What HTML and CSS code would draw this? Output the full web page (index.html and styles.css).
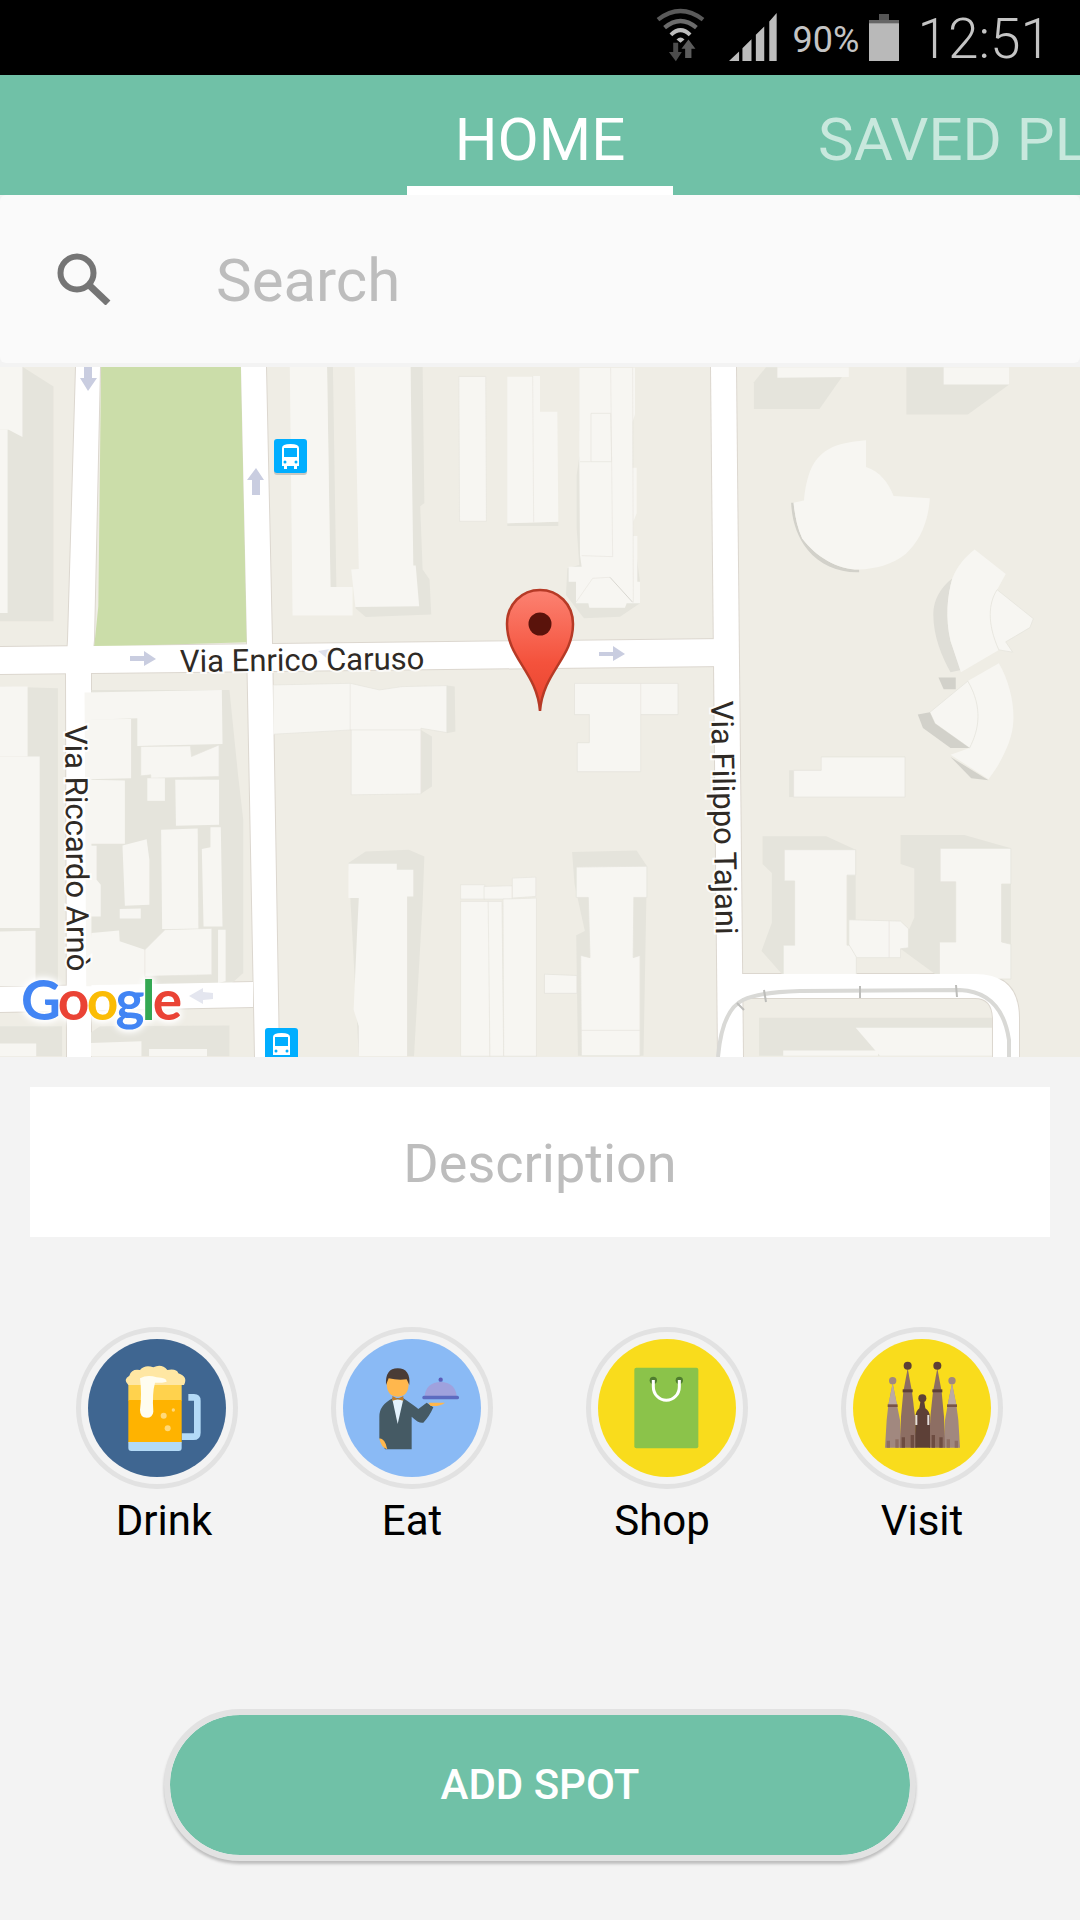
FILE: index.html
```html
<!DOCTYPE html>
<html>
<head>
<meta charset="utf-8">
<title>Home</title>
<link rel="stylesheet" href="styles.css">
</head>
<body>
<div id="screen">

<div class="statusbar">
  <svg class="st-wifi" viewBox="160 25 160 170">
    <path d="M172 62 Q240 10 308 62" fill="none" stroke="#5a5a5a" stroke-width="13"/>
    <path d="M192 86 Q240 46 288 86" fill="none" stroke="#6b6b6b" stroke-width="13"/>
    <path d="M211 108 Q240 80 269 108" fill="none" stroke="#bdbdbd" stroke-width="12"/>
    <path d="M228 122 Q240 110 252 122 L240 132 Z" fill="#bdbdbd"/>
    <path d="M218 132 H233 V160 H244 L226 188 L205 160 H218 Z" fill="#4c4c4c"/>
    <path d="M264 122 L285 150 H273 V178 H254 V150 H243 Z" fill="#5c5c5c"/>
  </svg>
  <svg class="st-signal" viewBox="385 40 143 143">
    <path d="M385 183 L415 155 V183 Z M425 145 L452 118 V183 H425 Z M465 105 L490 80 V183 H465 Z M505 65 L527 40 V183 H505 Z" fill="#bdbdbd"/>
  </svg>
  <span class="st-pct">90%</span>
  <svg class="st-batt" viewBox="807 37 90 141">
    <rect x="837" y="37" width="30" height="20" fill="#555"/>
    <rect x="807" y="55" width="90" height="123" fill="#b9b9b9"/>
    <rect x="807" y="55" width="90" height="10" fill="#666"/>
  </svg>
  <span class="st-time">12:51</span>
</div>

<div class="tabs">
  <div class="tab tab-on">HOME</div>
  <div class="tab tab-off">SAVED PLACES</div>
</div>

<div class="search">
  <svg class="search-icon" viewBox="0 0 54 52">
    <circle cx="20" cy="20" r="16.5" fill="none" stroke="#757575" stroke-width="6"/>
    <path d="M32 32 L51 50" stroke="#757575" stroke-width="7" fill="none"/>
  </svg>
  <span class="search-text">Search</span>
</div>

<svg class="map" viewBox="0 367 1080 690">
  <defs>
    <g id="roads">
      <polygon points="0,647 725,639 725,666 0,674"/>
      <polygon points="76,367 100,367 94,640 91,672 91,1057 67,1057 66,672 68,640"/>
      <polygon points="241,367 266,367 272,643 279,1057 255,1057 247,643"/>
      <polygon points="711,367 736,367 743,1057 718,1057"/>
      <polygon points="0,987 253,982 253,1007 0,1012"/>
      <path d="M730 974 H975 Q1019 974 1019 1018 V1057 H993 V1020 Q993 998 975 998 H730 Z"/>
    </g>
    <linearGradient id="pinfill" x1="0" y1="0" x2="0" y2="1">
      <stop offset="0" stop-color="#fc8272"/>
      <stop offset="0.6" stop-color="#f4523c"/>
      <stop offset="1" stop-color="#e8442f"/>
    </linearGradient>
  </defs>

  <rect class="ground" x="0" y="367" width="1080" height="690"/>
  <use href="#roads" class="road-edge"/>

  <!-- top left -->
  <g transform="translate(0 180) scale(.345 .333)">
    <polygon class="park" points="293,561 698,561 715,1388 273,1402 285,1280"/>
    <polygon class="shade" points="0,561 65,561 155,620 155,1325 0,1325"/>
    <polygon class="bld" points="0,561 65,561 65,772 25,750 0,750"/>
    <polygon class="bld" points="0,750 22,750 22,1300 0,1300"/>
    <polygon class="shade" points="948,561 965,561 975,1222 958,1240"/>
    <polygon class="bld" points="840,561 948,561 958,1222 1022,1222 1022,1308 848,1308"/>
    <polygon class="shade" points="1190,561 1225,561 1230,970 1218,980 1225,1170 1245,1200 1250,1305 1060,1312 1030,1285 1185,1100"/>
    <polygon class="bld" points="1028,561 1190,561 1198,1158 1205,1158 1215,1280 1030,1282 1018,1170 1040,1168"/>
    <polygon class="bld-line" points="1330,590 1408,590 1410,1025 1332,1025"/>
  </g>

  <!-- block above the pin -->
  <g transform="translate(490 365) scale(.3333)">
    <polygon class="shade" points="52,475 205,470 205,483 52,483"/>
    <polygon class="bld" points="52,35 128,35 128,33 150,33 150,140 202,140 205,470 52,475"/>
    <path class="thin" d="M128 33 L131 472"/>
    <polygon class="shade" points="255,8 268,8 268,198 282,198 282,275 268,275 260,330 260,490 268,600 232,610 228,690 282,760 390,755 450,715 450,650 430,500 430,8"/>
    <polygon class="bld" points="268,8 435,8 435,148 428,170 428,308 440,308 440,445 430,470 430,513 442,513 442,650 450,650 450,715 410,715 405,728 298,728 295,715 258,715 258,650 236,650 236,605 275,605 270,570 268,300 268,198"/>
    <polygon class="bld-line" points="303,145 362,145 365,290 303,290"/>
    <path class="thin" d="M362 8 L368 575 L275 572 M303 290 H270 M428 8 L430 712"/>
    <path class="thin" d="M258 712 L308 640 L360 637"/>
    <path class="thin-dark" d="M360 637 L428 712"/>
  </g>

  <!-- right side -->
  <g transform="translate(540 360) scale(.345 .446)">
    <polygon class="shade" points="620,50 655,16 895,16 810,110 620,110"/>
    <polygon class="bld" points="688,16 895,16 895,38 688,40"/>
    <polygon class="shade" points="1062,16 1360,16 1360,55 1240,122 1062,122"/>
    <polygon class="bld" points="1170,16 1360,16 1360,55 1170,55"/>

    <path class="edge3d" d="M728 320 C730 360 745 395 775 425 C810 460 870 478 925 476 L925 470 C860 470 800 440 760 400 C745 375 738 345 735 320 Z"/>
    <path class="bld" d="M735 320 L765 315 C770 270 785 240 800 225 C830 195 870 185 945 180 L945 240 C985 250 1010 275 1025 305 L1130 310 C1125 370 1095 410 1060 435 C1020 460 970 468 925 470 C860 470 800 440 760 400 C745 375 738 345 735 320 Z"/>

    <path class="shade-dk" d="M1195 490 C1160 510 1140 540 1140 570 C1140 620 1165 665 1190 700 L1220 695 L1190 630 C1175 580 1180 530 1195 490 Z"/>
    <path class="bld" d="M1260 425 L1350 480 L1325 515 C1300 545 1295 590 1330 650 L1220 700 L1190 630 C1175 580 1180 530 1195 490 C1210 460 1235 440 1260 425 Z"/>
    <path class="bld-line" d="M1325 515 L1430 580 L1420 600 L1350 632 L1370 655 L1330 650 C1295 590 1300 545 1325 515 Z"/>
    <path class="bld" d="M1330 680 C1360 720 1375 770 1372 810 C1370 850 1340 900 1300 940 L1190 885 L1245 870 C1270 830 1285 780 1240 720 Z"/>
    <path class="bld-line" d="M1240 720 L1130 790 L1145 815 L1245 870 C1272 830 1285 780 1240 720 Z"/>
    <polygon class="edge3d" points="1095,795 1130,790 1145,815 1245,870 1190,870 1110,825"/>
    <polygon class="edge3d" points="1190,890 1300,942 1250,938"/>
    <polygon class="edge3d" points="1155,712 1205,712 1205,738 1170,738"/>

    <polygon class="shade" points="722,920 735,920 735,980 722,980"/>
    <polygon class="bld-line" points="735,920 815,920 815,890 1058,890 1058,980 735,980"/>
    <polygon class="bld-line" points="100,725 400,725 400,795 292,795 292,923 108,923 108,858 143,858 143,795 100,795"/>
    <path class="thin" d="M292 725 V795"/>

    <polygon class="shade" points="645,1068 830,1068 915,1098 915,1380 705,1380 642,1325 672,1262 672,1150 645,1130"/>
    <polygon class="bld-line" points="708,1098 915,1098 915,1155 890,1155 890,1312 917,1312 917,1378 705,1378 705,1312 738,1312 738,1168 708,1168"/>
    <polygon class="shade" points="1045,1065 1230,1065 1365,1095 1365,1385 1160,1385 1045,1320 1085,1250 1085,1140 1045,1130"/>
    <polygon class="bld-line" points="895,1255 1045,1258 1068,1275 1068,1318 1045,1320 1045,1340 918,1340 895,1310"/>
    <path class="thin" d="M1012 1257 V1340"/>
    <polygon class="bld-line" points="1160,1095 1365,1095 1365,1175 1338,1175 1338,1305 1365,1310 1365,1388 1158,1388 1158,1305 1205,1305 1205,1170 1160,1170"/>

    <polygon class="shade" points="93,1103 280,1100 310,1135 300,1560 110,1560 105,1290 130,1280 100,1175"/>
    <polygon class="bld-line" points="105,1137 310,1135 310,1205 272,1205 270,1340 290,1335 290,1560 120,1560 118,1335 145,1340 140,1205 105,1205"/>
    <path class="thin" d="M120 1503 H290"/>
    <polygon class="bld-line" points="13,1377 107,1380 107,1420 13,1420"/>

    <polygon class="shade" points="635,1475 1310,1475 1310,1560 635,1560"/>
    <polygon class="bld" points="915,1497 1310,1497 1310,1560 985,1560"/>
    <polygon class="bld" points="705,1548 980,1548 980,1560 705,1560"/>
  </g>

  <!-- bottom left -->
  <g transform="translate(0 640) scale(.345 .333)">
    <polygon class="shade" points="0,140 168,145 168,1040 0,1040"/>
    <polygon class="bld" points="0,140 80,140 80,350 0,350"/>
    <polygon class="bld" points="0,350 115,350 115,865 0,865"/>
    <polygon class="bld" points="0,875 103,873 103,1040 0,1040"/>

    <polygon class="shade" points="265,150 665,150 690,405 705,540 705,1000 640,1060 250,1040"/>
    <polygon class="bld" points="245,158 643,150 645,312 398,318 398,235 235,240"/>
    <polygon class="bld" points="250,238 380,237 380,415 250,418"/>
    <polygon class="bld-line" points="408,320 552,318 555,350 635,315 635,410 437,415 437,405 408,408"/>
    <polygon class="bld" points="250,420 362,422 362,612 250,612"/>
    <polygon class="bld" points="427,415 478,415 478,483 427,483"/>
    <polygon class="bld" points="508,420 635,420 635,555 510,558"/>
    <polygon class="bld" points="355,617 425,598 433,660 433,795 362,798"/>
    <polygon class="bld" points="467,570 573,566 575,868 470,868"/>
    <polygon class="bld" points="585,628 610,622 610,562 640,562 645,860 590,860"/>
    <polygon class="bld" points="250,618 280,618 280,720 292,735 292,830 250,830"/>
    <polygon class="bld" points="347,808 408,806 408,836 347,836"/>
    <polygon class="bld" points="265,880 345,872 347,905 420,930 420,1040 250,1040"/>
    <polygon class="bld-line" points="420,930 478,870 614,866 614,1005 420,1010"/>
    <polygon class="bld" points="632,870 654,870 654,1025 632,1030"/>

    <polygon class="shade" points="1295,137 1318,140 1320,275 1295,280"/>
    <polygon class="shade" points="1220,270 1252,290 1252,440 1220,462"/>
    <polygon class="bld-line" points="792,135 1015,130 1100,150 1165,140 1295,137 1295,278 1220,265 1220,462 1018,465 1018,270 792,283"/>
    <path class="thin" d="M1015 130 V270 H1220"/>

    <polygon class="shade" points="1010,670 1060,635 1185,630 1230,650 1225,790 1200,1250 1040,1250"/>
    <polygon class="bld" points="1010,672 1150,672 1150,690 1198,690 1198,770 1180,770 1180,1250 1040,1250 1040,1160 1025,1110 1035,880 1040,775 1010,775"/>

    <polygon class="bld-line" points="1335,735 1405,735 1405,778 1335,778"/>
    <polygon class="bld-line" points="1403,740 1485,738 1485,778 1403,778"/>
    <polygon class="bld-line" points="1485,715 1553,712 1553,770 1485,775"/>
    <polygon class="bld-line" points="1335,785 1420,785 1420,1250 1335,1250"/>
    <polygon class="bld-line" points="1415,785 1455,785 1460,1250 1420,1250"/>
    <polygon class="bld-line" points="1458,778 1555,775 1555,1250 1460,1250"/>

    <polygon class="shade" points="0,1160 180,1160 180,1250 0,1250"/>
    <polygon class="shade" points="220,1210 290,1160 665,1158 665,1250 220,1250"/>
    <polygon class="bld" points="0,1212 105,1212 105,1250 0,1250"/>
    <polygon class="bld" points="220,1212 410,1205 410,1250 220,1250"/>
    <polygon class="bld" points="432,1228 600,1228 600,1250 432,1250"/>
  </g>

  <use href="#roads" class="road-fill"/>

  <!-- buildings that sit over the road edge -->
  <g transform="translate(0 640) scale(.345 .333)">
    <polygon class="bld" points="245,158 265,158 265,1040 250,1040"/>
  </g>

  <!-- rail line -->
  <path class="rail" d="M718 1057 Q722 1010 743 1000 Q760 992 800 991 L960 990 Q1002 992 1009 1040 V1057"/>
  <path class="rail-tick" d="M737 1003 L744 1010 M764 990 L766 1002 M860 986 V998 M956 985 L957 997"/>

  <!-- one way arrows -->
  <g class="arrow">
    <path d="M84 367 H92 V378 H97 L88 391 L80 378 H84 Z"/>
    <path d="M252 495 V480 H247 L256 468 L264 480 H260 V495 Z"/>
    <path d="M130 656 H144 V651 L156 659 L144 666 V661 H130 Z"/>
    <path d="M599 652 H613 V646 L625 654 L613 661 V656 H599 Z"/>
    <path d="M189 996 L203 988 V992 L213 993 V999 L203 1000 V1004 Z" opacity=".5"/>
    <path d="M318 651 L336 648 L330 661 Z" opacity=".6"/>
  </g>

  <!-- bus stops -->
  <g class="bus" transform="translate(274 439)">
    <rect class="bus-sh" x="0" y="2" width="33" height="34" rx="3"/>
    <rect class="bus-bg" width="33" height="34" rx="3"/>
    <path class="bus-glyph" d="M8 9 Q8 5 16.500 5 Q25 5 25 9 V27 H23 V30 H20 V27 H13 V30 H10 V27 H8 Z"/>
    <rect class="bus-bg" x="10" y="9" width="13" height="9"/>
    <circle class="bus-bg" cx="11" cy="23" r="1.500"/>
    <circle class="bus-bg" cx="22" cy="23" r="1.500"/>
  </g>
  <g class="bus" transform="translate(265 1028)">
    <rect class="bus-bg" width="33" height="36" rx="3"/>
    <path class="bus-glyph" d="M8 9 Q8 5 16.500 5 Q25 5 25 9 V27 H8 Z"/>
    <rect class="bus-bg" x="10" y="9" width="13" height="9"/>
    <circle class="bus-bg" cx="11" cy="23" r="1.500"/>
    <circle class="bus-bg" cx="22" cy="23" r="1.500"/>
  </g>

  <!-- street names -->
  <text class="street" transform="translate(180 672) rotate(-.7)">Via Enrico Caruso</text>
  <text class="street" transform="translate(65 725) rotate(89.500)">Via Riccardo Arnò</text>
  <text class="street" transform="translate(711 701) rotate(88.800)">Via Filippo Tajani</text>

  <!-- logo -->
  <text class="google" x="21" y="1020" textLength="161" lengthAdjust="spacing"><tspan fill="#4285f4">G</tspan><tspan fill="#ea4335">o</tspan><tspan fill="#fbbc05">o</tspan><tspan fill="#4285f4">g</tspan><tspan fill="#34a853">l</tspan><tspan fill="#ea4335">e</tspan></text>

  <!-- pin -->
  <path d="M540 711 C537 672 507 658 507 624 C507 604 522 590 540 590 C558 590 573 604 573 624 C573 658 543 672 540 711 Z" fill="url(#pinfill)" stroke="#b63a26" stroke-width="2.500"/>
  <circle cx="540" cy="624" r="11.500" fill="#5a130b"/>
</svg>

<div class="desc">Description</div>

<div class="cats">
  <div class="cat">
    <div class="ring"><div class="disc disc-blue">
      <svg viewBox="84 87 414 414">
        <path d="M385 262 H402 Q412 262 412 272 V368 Q412 380 400 380 H365" fill="none" stroke="#b3daf7" stroke-width="20"/>
        <rect x="205" y="220" width="160" height="52" fill="#ffd24d"/>
        <rect x="205" y="270" width="160" height="128" fill="#ffb300"/>
        <path d="M205 396 H365 V414 Q365 423 356 423 H214 Q205 423 205 414 Z" fill="#b3daf7"/>
        <path d="M205 225 Q188 208 208 197 Q215 175 240 180 Q255 163 280 172 Q305 160 322 180 Q350 175 355 190 Q385 200 372 225 Z" fill="#ffe7a3"/>
        <path d="M240 205 Q262 192 290 202 Q320 203 320 215 Q300 220 285 218 Q276 250 280 305 Q278 323 260 323 Q240 323 240 300 Q246 250 240 205 Z" fill="#fffdf0"/>
        <circle cx="311" cy="317" r="9" fill="#ffd97a"/>
        <circle cx="323" cy="355" r="9" fill="#ffd97a"/>
        <circle cx="340" cy="300" r="5" fill="#ffd97a"/>
      </svg>
    </div></div>
    <div class="cat-label cat-label-drink">Drink</div>
  </div>
  <div class="cat">
    <div class="ring"><div class="disc disc-sky">
      <svg viewBox="849 87 414 414">
        <path d="M958 320 Q958 285 998 265 H1030 Q1060 285 1075 297 L1100 278 L1120 292 Q1108 320 1090 338 Q1078 342 1055 320 V418 H975 L958 385 Z" fill="#455a64"/>
        <path d="M958 385 Q975 385 982 418 Q962 412 958 385 Z" fill="#ffb74d"/>
        <path d="M997 268 H1030 L1013 342 Z" fill="#e3f2fd"/>
        <path d="M997 258 L1013 266 L1030 258 V272 L1013 268 L997 272 Z" fill="#bf7a26"/>
        <path d="M980 220 Q980 190 1013 190 Q1046 190 1046 220 Q1046 260 1013 260 Q980 260 980 220 Z" fill="#ffb74d"/>
        <path d="M978 225 Q975 175 1013 175 Q1052 175 1048 225 L1040 208 Q1015 212 986 205 Z" fill="#4a3c36"/>
        <path d="M1105 278 H1155 Q1140 290 1112 288 Z" fill="#ffb74d"/>
        <path d="M1094 258 Q1098 218 1142 216 Q1186 218 1190 258 Z" fill="#9fa1dd"/>
        <circle cx="1142" cy="209" r="6.500" fill="#5c5cb8"/>
        <rect x="1087" y="257" width="110" height="11" rx="5" fill="#5c6bc0"/>
      </svg>
    </div></div>
    <div class="cat-label">Eat</div>
  </div>
  <div class="cat">
    <div class="ring"><div class="disc disc-yellow">
      <svg viewBox="84 87 414 414">
        <rect x="193" y="173" width="192" height="242" rx="6" fill="#8bc34a"/>
        <circle cx="250" cy="211" r="11" fill="#4f7d2f"/>
        <circle cx="328" cy="211" r="11" fill="#4f7d2f"/>
        <path d="M250 210 V230 A39 41 0 0 0 328 230 V210" fill="none" stroke="#fff" stroke-width="9"/>
      </svg>
    </div></div>
    <div class="cat-label cat-label-shop">Shop</div>
  </div>
  <div class="cat">
    <div class="ring"><div class="disc disc-yellow">
      <svg viewBox="849 87 414 414">
        <polygon points="945,413 950,330 955,285 968,220 981,285 990,330 995,413" fill="#a1887f"/>
        <polygon points="1120,413 1125,330 1133,285 1146,220 1159,285 1165,330 1170,413" fill="#a1887f"/>
        <polygon points="955,285 968,220 981,285" fill="#bcaaa4"/>
        <polygon points="1133,285 1146,220 1159,285" fill="#bcaaa4"/>
        <rect x="953" y="283" width="30" height="8" fill="#795548"/>
        <rect x="1131" y="283" width="30" height="8" fill="#795548"/>
        <circle cx="968" cy="212" r="11" fill="#a1887f"/>
        <circle cx="1146" cy="212" r="11" fill="#a1887f"/>
        <polygon points="990,413 993,320 1000,245 1013,175 1026,245 1035,320 1040,413" fill="#8d6e63"/>
        <polygon points="1077,413 1081,320 1089,245 1102,175 1115,245 1122,320 1125,413" fill="#8d6e63"/>
        <rect x="998" y="238" width="30" height="9" fill="#5d4037"/>
        <rect x="1087" y="238" width="30" height="9" fill="#5d4037"/>
        <circle cx="1013" cy="167" r="12" fill="#5d4037"/>
        <circle cx="1102" cy="167" r="12" fill="#5d4037"/>
        <path d="M1036 413 V320 Q1038 302 1048 295 L1052 270 H1062 L1066 295 Q1078 302 1080 320 V413 Z" fill="#5d4037"/>
        <circle cx="1057" cy="265" r="12" fill="#5d4037"/>
        <rect x="1036" y="315" width="6" height="30" fill="#e6dfdb"/>
        <rect x="1072" y="315" width="6" height="30" fill="#e6dfdb"/>
        <path d="M995 413 V382 H1005 V413 Z M1022 413 V375 H1032 V413 Z M1085 413 V375 H1095 V413 Z M1108 413 V382 H1118 V413 Z" fill="#6d4c41"/>
        <path d="M950 413 V392 H960 V413 Z M976 413 V388 H986 V413 Z M1130 413 V388 H1140 V413 Z M1154 413 V392 H1164 V413 Z" fill="#8d6e63"/>
      </svg>
    </div></div>
    <div class="cat-label">Visit</div>
  </div>
</div>

<div class="btn">ADD SPOT</div>

</div>
</body>
</html>
```

FILE: styles.css
```css
html, body {
margin:0;
padding:0;
}
body {
background-color:#f3f3f3;
font-family:Roboto, sans-serif;
}
#screen {
width:1080px;
height:1920px;
overflow:hidden;
display:flex;
flex-direction:column;
}

/* status bar */
.statusbar {
height:75px;
flex:none;
background-color:#000;
color:#c4c4c4;
display:flex;
align-items:center;
justify-content:flex-end;
padding-right:29px;
box-sizing:border-box;
}
.st-wifi {
width:53px;
height:57px;
margin-top:-4px;
}
.st-signal {
width:48px;
height:48px;
margin-left:22px;
margin-top:-2px;
}
.st-pct {
font-size:36px;
margin-left:16px;
margin-top:4px;
}
.st-batt {
width:30px;
height:47px;
margin-left:10px;
margin-top:-1px;
}
.st-time {
font-size:55px;
font-weight:300;
margin-left:18px;
margin-top:3px;
}

/* tabs */
.tabs {
height:120px;
flex:none;
background-color:#70c1a7;
display:flex;
padding-left:407px;
box-sizing:border-box;
white-space:nowrap;
}
.tab {
font-size:60px;
line-height:130px;
height:120px;
box-sizing:border-box;
flex:none;
}
.tab-on {
width:266px;
text-align:center;
color:#fff;
border-bottom:9px solid #fff;
}
.tab-off {
margin-left:145px;
color:#c8e8dd;
}

/* search */
.search {
height:168px;
flex:none;
background-color:#fafafa;
border-radius:6px;
display:flex;
align-items:center;
margin-bottom:4px;
}
.search-icon {
width:54px;
height:52px;
margin-left:57px;
flex:none;
}
.search-text {
font-size:60px;
color:#bdbdbd;
margin-left:105px;
margin-top:3px;
}

/* map */
.map {
display:block;
width:1080px;
height:690px;
flex:none;
}
.ground { fill:#efede5; }
.park { fill:#cbdda9; }
.shade { fill:#e5e4dc; }
.shade-dk { fill:#dfded7; }
.edge3d { fill:#d2d1ca; }
.bld { fill:#f7f6f2; }
.bld-line { fill:#f7f6f2; stroke:#e6e4dd; stroke-width:2; }
.thin { fill:none; stroke:#e8e6df; stroke-width:2; }
.thin-dark { fill:none; stroke:#c9c7c0; stroke-width:2; }
.road-edge { fill:#fff; stroke:#dcd7cf; stroke-width:2; }
.road-fill { fill:#fff; }
.rail { fill:none; stroke:#d9d9d6; stroke-width:4; }
.rail-tick { fill:none; stroke:#bdbdba; stroke-width:2; }
.arrow { fill:#c9cde0; }
.bus-sh { fill:#c8c8c2; }
.bus-bg { fill:#00aeff; }
.bus-glyph { fill:#fff; }
.street {
font-family:Roboto, sans-serif;
font-size:31px;
fill:#2f2a25;
stroke:#fff;
stroke-width:4px;
stroke-opacity:.85;
paint-order:stroke;
}
.google {
font-family:Lato, sans-serif;
font-size:55px;
font-weight:700;
filter:drop-shadow(0 0 2px #fff) drop-shadow(0 0 3px #fff) drop-shadow(0 0 3px rgba(255,255,255,.8));
}

/* description */
.desc {
height:150px;
flex:none;
margin:30px 30px 0;
background-color:#fff;
color:#bdbdbd;
font-size:54px;
line-height:154px;
text-align:center;
}

/* categories */
.cats {
display:flex;
gap:93px;
padding-left:76px;
margin-top:90px;
flex:none;
}
.cat {
width:162px;
}
.ring {
width:162px;
height:162px;
box-sizing:border-box;
border:5px solid #e2e2e2;
border-radius:50%;
padding:7px;
}
.disc {
width:138px;
height:138px;
border-radius:50%;
}
.disc svg {
display:block;
width:138px;
height:138px;
}
.disc-blue { background-color:#3f6691; }
.disc-sky { background-color:#8abaf5; }
.disc-yellow { background-color:#f9dc1c; }
.cat-label {
font-size:42px;
line-height:48px;
margin-top:8px;
text-align:center;
color:#000;
}
.cat-label-drink { padding-left:14px; }
.cat-label-shop { padding-right:10px; }

/* button */
.btn {
flex:none;
width:752px;
height:152px;
box-sizing:border-box;
margin:164px 0 0 164px;
border:6px solid #e2e2e2;
border-radius:76px;
background-color:#70c1a7;
background-clip:padding-box;
color:#fff;
font-size:42px;
font-weight:500;
line-height:140px;
text-align:center;
box-shadow:0 3px 3px rgba(0,0,0,.22);
}
```
